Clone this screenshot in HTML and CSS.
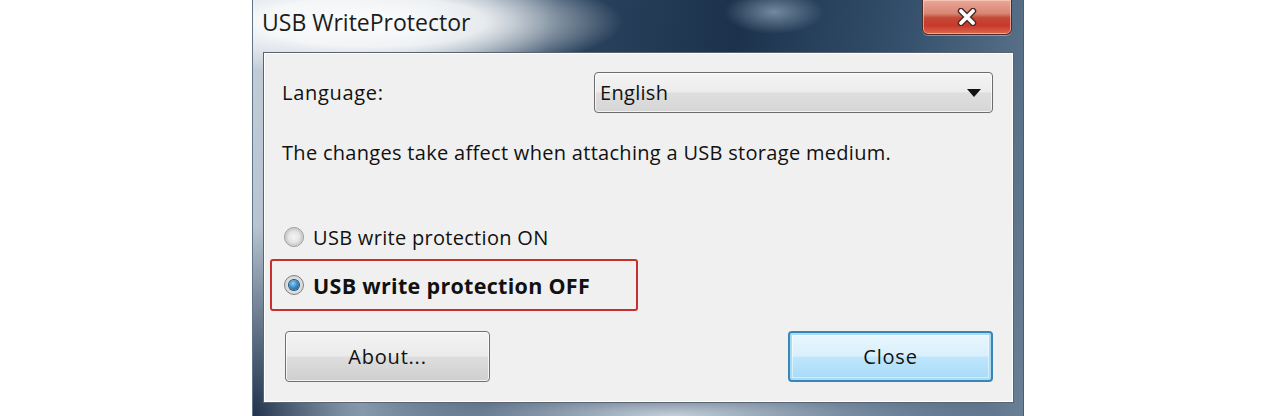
FILE: index.html
```html
<!DOCTYPE html>
<html>
<head>
<meta charset="utf-8">
<link rel="stylesheet" href="styles.css">
</head>
<body>
<div class="window">
  <div class="titlebar">
    <span class="title">USB WriteProtector</span>
    <div class="close-x">
      <svg width="22" height="18" viewBox="0 0 22 18">
        <path d="M5 3 L17 15 M17 3 L5 15" stroke="#4a2a24" stroke-width="6.5" stroke-linecap="round"/>
        <path d="M5 3 L17 15 M17 3 L5 15" stroke="#ffffff" stroke-width="3.8" stroke-linecap="round"/>
      </svg>
    </div>
  </div>
  <div class="frame-body">
    <div class="panel">
      <div class="lang-row">
        <span class="label">Language:</span>
        <div class="combo">
          <span>English</span>
          <svg class="arrow" width="14" height="8" viewBox="0 0 14 8"><path d="M0 0 H14 L7 8 Z" fill="#111"/></svg>
        </div>
      </div>
      <p class="info">The changes take affect when attaching a USB storage medium.</p>
      <div class="radio"><span class="rb"></span><span>USB write protection ON</span></div>
      <div class="highlight">
        <div class="radio bold"><span class="rb sel"></span><span>USB write protection OFF</span></div>
      </div>
      <div class="buttons">
        <button class="btn">About...</button>
        <button class="btn default">Close</button>
      </div>
    </div>
  </div>
</div>
</body>
</html>
```
FILE: styles.css
```css
html, body {
  margin: 0;
  padding: 0;
  background: #ffffff;
}
body {
  font-family: "Open Sans", "Noto Sans", sans-serif;
  height: 416px;
  overflow: hidden;
}
.window {
  margin-left: 252px;
  width: 772px;
  height: 416px;
  display: flex;
  flex-direction: column;
  box-sizing: border-box;
  background:
    radial-gradient(ellipse 250px 55px at 120px 22px, rgba(255,255,255,0.97) 0%, rgba(255,255,255,0.85) 45%, rgba(255,255,255,0) 100%),
    radial-gradient(ellipse 50px 22px at 521px 12px, rgba(170,190,210,0.6), rgba(170,190,210,0) 100%),
    radial-gradient(ellipse 110px 190px at 0px 416px, rgba(28,46,72,0.97), rgba(28,46,72,0) 100%),
    radial-gradient(ellipse 320px 40px at 420px 416px, rgba(215,225,235,0.9), rgba(215,225,235,0) 100%),
    linear-gradient(100deg, #c6d0da 0%, #8ea1b3 20%, #2c4560 36%, #1c324c 58%, #34506c 78%, #6a8096 100%);
  border-left: 1px solid #5f738a;
  border-right: 1px solid #4a5d72;
}
.titlebar {
  height: 52px;
  flex: none;
  display: flex;
  align-items: flex-start;
  padding-left: 9px;
  box-sizing: border-box;
}
.title {
  font-size: 23px;
  line-height: 23px;
  margin-top: 11px;
  color: #1c1c1c;
}
.close-x {
  margin-left: auto;
  margin-right: 11px;
  width: 90px;
  height: 35px;
  box-sizing: border-box;
  border: 1px solid #4d2d28;
  border-top: none;
  border-radius: 0 0 6px 6px;
  background: linear-gradient(to bottom, #e9a898 0%, #d98574 40%, #c44a37 52%, #c9382a 75%, #dc6a4e 100%);
  box-shadow: inset 0 0 0 1px rgba(255,220,210,0.55), 0 1px 0 rgba(255,255,255,0.35);
  display: flex;
  align-items: center;
  justify-content: center;
}
.frame-body {
  flex: 1;
  padding: 0 9px 13px 10px;
  display: flex;
}
.panel {
  flex: 1;
  background: #f0f0f0;
  border: 1px solid #5a6470;
  box-shadow: inset 0 0 0 1px #ffffff;
  padding: 19px 20px 0 18px;
  box-sizing: border-box;
  display: flex;
  flex-direction: column;
  color: #111;
  font-size: 20px;
  letter-spacing: 0.3px;
}
.lang-row {
  display: flex;
  align-items: center;
  height: 41px;
}
.label {
  width: 312px;
  flex: none;
  letter-spacing: 0.7px;
}
.combo {
  flex: 1;
  height: 41px;
  box-sizing: border-box;
  border: 1px solid #6c6c6c;
  border-radius: 4px;
  background: linear-gradient(to bottom, #f4f4f4 0%, #ececec 48%, #dedede 52%, #d6d6d6 100%);
  box-shadow: inset 0 0 0 1px rgba(255,255,255,0.7);
  display: flex;
  align-items: center;
  padding: 0 11px 0 5px;
}
.combo span {
  flex: 1;
}
.info {
  margin: 22px 0 0 0;
  line-height: 36px;
}
.radio {
  display: flex;
  align-items: center;
  gap: 9px;
  height: 30px;
}
.info + .radio {
  margin-top: 51px;
  padding-left: 2px;
}
.rb {
  width: 20px;
  height: 20px;
  border-radius: 50%;
  box-sizing: border-box;
  border: 1px solid #9a9a9a;
  background: radial-gradient(circle at 50% 50%, #f4f4f4 0%, #e4e4e4 45%, #cfcfcf 60%, #f0f0f0 100%);
  flex: none;
  position: relative;
}
.rb.sel {
  border-color: #7d8186;
  background: radial-gradient(circle at 50% 50%, #f0f0f0 0%, #d8d8d8 70%, #efefef 100%);
}
.rb.sel::after {
  content: "";
  position: absolute;
  left: 4px;
  top: 4px;
  width: 10px;
  height: 10px;
  border-radius: 50%;
  background: radial-gradient(circle at 40% 35%, #8fd3f7 0%, #3a8fc7 45%, #164f7d 100%);
  box-shadow: 0 0 0 1px #1f4d73;
}
.highlight {
  margin-top: 7px;
  margin-left: -12px;
  width: 368px;
  height: 52px;
  flex: none;
  box-sizing: border-box;
  border: 2px solid #c6302f;
  border-radius: 3px;
  display: flex;
  align-items: center;
  padding-left: 12px;
}
.radio.bold {
  font-weight: 700;
  font-size: 21.5px;
  gap: 9px;
  letter-spacing: 0.3px;
}
.buttons {
  display: flex;
  justify-content: space-between;
  margin-top: 20px;
  padding-left: 3px;
}
.btn {
  width: 205px;
  height: 51px;
  font-family: inherit;
  font-size: 20px;
  letter-spacing: 0.8px;
  color: #111;
  border: 1px solid #707070;
  border-radius: 4px;
  background: linear-gradient(to bottom, #f3f3f3 0%, #ebebeb 48%, #dddddd 52%, #cfcfcf 100%);
  box-shadow: inset 0 0 0 1px rgba(255,255,255,0.75);
  padding: 0;
}
.btn.default {
  border: 2px solid #3a85b8;
  background: linear-gradient(to bottom, #eaf6fd 0%, #d9f0fc 48%, #bee6fd 52%, #a7d9f5 100%);
  box-shadow: inset 0 0 0 2px #a8dcf3, inset 0 0 0 3px rgba(255,255,255,0.5);
}
```
